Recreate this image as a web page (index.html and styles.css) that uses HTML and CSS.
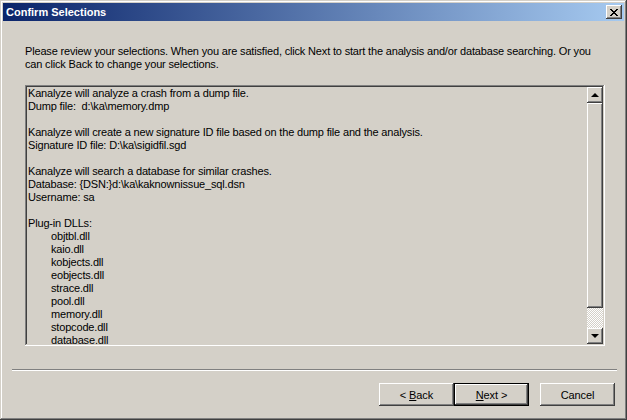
FILE: index.html
```html
<!DOCTYPE html>
<html>
<head>
<meta charset="utf-8">
<link rel="stylesheet" href="styles.css">
</head>
<body>
<div class="window">
  <div class="titlebar">
    <span class="title">Confirm Selections</span>
    <div class="close btn3d">
      <svg width="8" height="7" viewBox="0 0 8 7"><path d="M0 0h2v1h1v1h2V1h1V0h2v1H7v1H6v1H5v1h1v1h1v1h1v1H6V6H5V5H3v1H2v1H0V6h1V5h1V4h1V3H2V2H1V1H0z" fill="#000"/></svg>
    </div>
  </div>
  <div class="body">
    <p class="intro">Please review your selections. When you are satisfied, click Next to start the analysis and/or database searching. Or you can click Back to change your selections.</p>
    <div class="field">
      <div class="lines">
        <div class="ln">Kanalyze will analyze a crash from a dump file.</div>
        <div class="ln">Dump file:&nbsp; d:\ka\memory.dmp</div>
        <div class="ln">&nbsp;</div>
        <div class="ln">Kanalyze will create a new signature ID file based on the dump file and the analysis.</div>
        <div class="ln">Signature ID file: D:\ka\sigidfil.sgd</div>
        <div class="ln">&nbsp;</div>
        <div class="ln">Kanalyze will search a database for similar crashes.</div>
        <div class="ln">Database: {DSN:}d:\ka\kaknownissue_sql.dsn</div>
        <div class="ln">Username: sa</div>
        <div class="ln">&nbsp;</div>
        <div class="ln">Plug-in DLLs:</div>
        <div class="ln ind">objtbl.dll</div>
        <div class="ln ind">kaio.dll</div>
        <div class="ln ind">kobjects.dll</div>
        <div class="ln ind">eobjects.dll</div>
        <div class="ln ind">strace.dll</div>
        <div class="ln ind">pool.dll</div>
        <div class="ln ind">memory.dll</div>
        <div class="ln ind">stopcode.dll</div>
        <div class="ln ind">database.dll</div>
      </div>
      <div class="scrollbar">
        <div class="sbtn btn3d"><span class="arrow up"></span></div>
        <div class="thumb btn3d"></div>
        <div class="track"></div>
        <div class="sbtn btn3d"><span class="arrow down"></span></div>
      </div>
    </div>
    <div class="sep"></div>
    <div class="buttons">
      <div class="pair">
        <div class="pbtn btn3d"><span>&lt; <u>B</u>ack</span></div>
        <div class="defwrap"><div class="pbtn btn3d"><span><u>N</u>ext &gt;</span></div></div>
      </div>
      <div class="pbtn btn3d cancel"><span>Cancel</span></div>
    </div>
  </div>
</div>
</body>
</html>
```

FILE: styles.css
```css
html, body {
  margin: 0;
  padding: 0;
  background: #d4d0c8;
}
body {
  font-family: "Liberation Sans", Arial, sans-serif;
  font-size: 11px;
  color: #000;
}
.window {
  width: 627px;
  height: 420px;
  box-sizing: border-box;
  padding: 3px;
  background: #d4d0c8;
  box-shadow: inset -1px -1px #404040, inset 1px 1px #d4d0c8, inset -2px -2px #808080, inset 2px 2px #fff;
  display: flex;
  flex-direction: column;
}
.titlebar {
  height: 18px;
  background: linear-gradient(to right, #0a246a, #a6caf0);
  display: flex;
  align-items: center;
  justify-content: space-between;
  padding: 0 2px 0 3px;
}
.title {
  color: #fff;
  font-weight: bold;
  font-size: 11px;
  font-family: "Liberation Sans", Arial, sans-serif;
}
.btn3d {
  background: #d4d0c8;
  box-shadow: inset -1px -1px #404040, inset 1px 1px #fff, inset -2px -2px #808080, inset 2px 2px #d4d0c8;
}
.close {
  width: 16px;
  height: 14px;
  display: flex;
  align-items: center;
  justify-content: center;
}
.close svg { display: block; margin-left: -1px; }
.body {
  flex: 1;
  display: flex;
  flex-direction: column;
}
.intro {
  margin: 24px 0 14px 22px;
  width: 570px;
  line-height: 13px;
  letter-spacing: -0.17px;
}
.field {
  margin-left: 22px;
  width: 580px;
  height: 261px;
  box-sizing: border-box;
  padding: 2px;
  display: flex;
  box-shadow: inset -1px -1px #fff, inset 1px 1px #808080, inset -2px -2px #d4d0c8, inset 2px 2px #404040;
}
.lines {
  flex: 1;
  padding-left: 1px;
  line-height: 13px;
  letter-spacing: -0.17px;
}
.ln { white-space: pre; height: 13px; }
.ind { padding-left: 23px; }
.scrollbar {
  width: 16px;
  display: flex;
  flex-direction: column;
}
.sbtn {
  height: 16px;
  flex: none;
  display: flex;
  align-items: center;
  justify-content: center;
}
.arrow {
  width: 0;
  height: 0;
  border-left: 4px solid transparent;
  border-right: 4px solid transparent;
}
.arrow.up { border-bottom: 4px solid #000; margin-top: -1px; }
.arrow.down { border-top: 4px solid #000; }
.thumb {
  height: 205px;
  flex: none;
}
.track {
  flex: 1;
  background: repeating-conic-gradient(#fff 0 25%, #d4d0c8 0 50%) 0 0 / 2px 2px;
}
.sep {
  margin: 23px 7px 0 9px;
  border-top: 1px solid #808080;
  border-bottom: 1px solid #fff;
}
.buttons {
  display: flex;
  justify-content: flex-end;
  margin: 12px 9px 0 0;
  gap: 11px;
}
.pair {
  display: flex;
  align-items: flex-start;
}
.pbtn {
  width: 75px;
  height: 23px;
  box-sizing: border-box;
  display: flex;
  align-items: center;
  justify-content: center;
  letter-spacing: -0.1px;
}
.defwrap {
  border: 1px solid #000;
  width: 75px;
  height: 23px;
  box-sizing: border-box;
}
.defwrap .pbtn {
  width: 73px;
  height: 21px;
}
u { text-decoration: underline; text-underline-offset: 1px; }
```
